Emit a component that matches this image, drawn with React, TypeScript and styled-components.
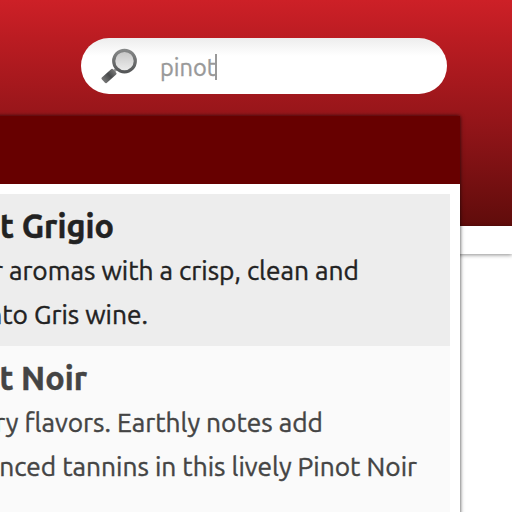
import React from "react";
import styled, { createGlobalStyle } from "styled-components";

const GlobalStyle = createGlobalStyle`
  * { box-sizing: border-box; }
  body { margin: 0; background: #fff; overflow: hidden; }
`;

const Page = styled.div`
  position: relative;
  width: 512px;
  height: 512px;
  overflow: hidden;
  background: #fff;
  font-family: Ubuntu, "Noto Sans", "Open Sans", sans-serif;
`;

const Header = styled.header`
  height: 226px;
  padding: 38px 65px 0 81px;
  background: linear-gradient(#cd2027 0, #bb1c22 38px, #8f1418 132px, #600c0b 226px);
`;

const NavStrip = styled.div`
  height: 28px;
  background: #fff;
  box-shadow: 0 1px 4px rgba(0, 0, 0, 0.45);
`;

const SearchBox = styled.label`
  display: flex;
  align-items: center;
  height: 56px;
  padding-left: 19px;
  border-radius: 28px;
  background: linear-gradient(#ededed, #fff 18px);
`;

const Query = styled.span`
  margin-left: 22px;
  padding-top: 1px;
  color: #999;
  font-size: 23.6px;
  line-height: 30px;
  -webkit-text-stroke: 0.35px currentColor;
`;

const Caret = styled.span`
  width: 2px;
  height: 26px;
  margin: 2px 0 0 -1px;
  background: #999;
`;

const Dropdown = styled.section`
  position: absolute;
  top: 116px;
  left: -20px;
  width: 480px;
  height: 420px;
  padding-left: 20px;
  background: #fff;
  box-shadow: 0 0 4px rgba(0, 0, 0, 0.8);
`;

const DropdownHeader = styled.div`
  height: 68px;
  margin-left: -20px;
  background: #670000;
`;

const Results = styled.div`
  padding: 10px 10px 0 0;
`;

const Result = styled.article<{ $active?: boolean }>`
  height: ${(p) => (p.$active ? 152 : 180)}px;
  padding-top: 10px;
  overflow: hidden;
  background: ${(p) => (p.$active ? "#ededed" : "#fafafa")};
  color: ${(p) => (p.$active ? "#222" : "#444")};
`;

const Title = styled.h2<{ $end: number }>`
  display: flex;
  justify-content: flex-end;
  width: ${(p) => p.$end}px;
  margin: 0;
  font-size: 32.4px;
  font-weight: 700;
  line-height: 44px;
  white-space: nowrap;
  -webkit-text-stroke: 0.5px currentColor;
`;

const Line = styled.div<{ $end: number }>`
  display: flex;
  justify-content: flex-end;
  width: ${(p) => p.$end}px;
  font-size: 26.3px;
  line-height: 44px;
  white-space: nowrap;
  -webkit-text-stroke: 0.4px currentColor;
`;

const MagnifierIcon = () => (
  <svg width="38" height="38" viewBox="0 0 38 38">
    <defs>
      <linearGradient id="rim" x1="0" y1="0" x2="0" y2="1">
        <stop offset="0" stopColor="#858787" />
        <stop offset="1" stopColor="#555758" />
      </linearGradient>
      <linearGradient id="glass" x1="0" y1="0" x2="0" y2="1">
        <stop offset="0" stopColor="#c4c4c4" />
        <stop offset="1" stopColor="#eeeeee" />
      </linearGradient>
      <linearGradient id="handle" x1="0" y1="0" x2="1" y2="0">
        <stop offset="0" stopColor="#777" />
        <stop offset="0.55" stopColor="#484a4b" />
        <stop offset="1" stopColor="#777" />
      </linearGradient>
    </defs>
    <path d="M13.2 25 L16.8 21.6" stroke="#999" strokeWidth="3" />
    <rect x="-7.6" y="-3.6" width="15.2" height="7.2" rx="1.2" fill="url(#handle)" transform="translate(9 29) rotate(-42)" />
    <circle cx="24.5" cy="14.1" r="10.8" fill="url(#glass)" stroke="url(#rim)" strokeWidth="3.2" />
  </svg>
);

export default function App() {
  return (
    <Page>
      <GlobalStyle />
      <Header>
        <SearchBox>
          <MagnifierIcon />
          <Query>pinot</Query>
          <Caret />
        </SearchBox>
      </Header>
      <NavStrip />
      <Dropdown>
        <DropdownHeader />
        <Results>
          <Result $active>
            <Title $end={114}>Pinot Grigio</Title>
            <Line $end={359}>pear aromas with a crisp, clean and</Line>
            <Line $end={148}>Pinto Gris wine.</Line>
          </Result>
          <Result>
            <Title $end={87}>Pinot Noir</Title>
            <Line $end={323}>cherry flavors. Earthly notes add</Line>
            <Line $end={417}>balanced tannins in this lively Pinot Noir</Line>
          </Result>
        </Results>
      </Dropdown>
    </Page>
  );
}
